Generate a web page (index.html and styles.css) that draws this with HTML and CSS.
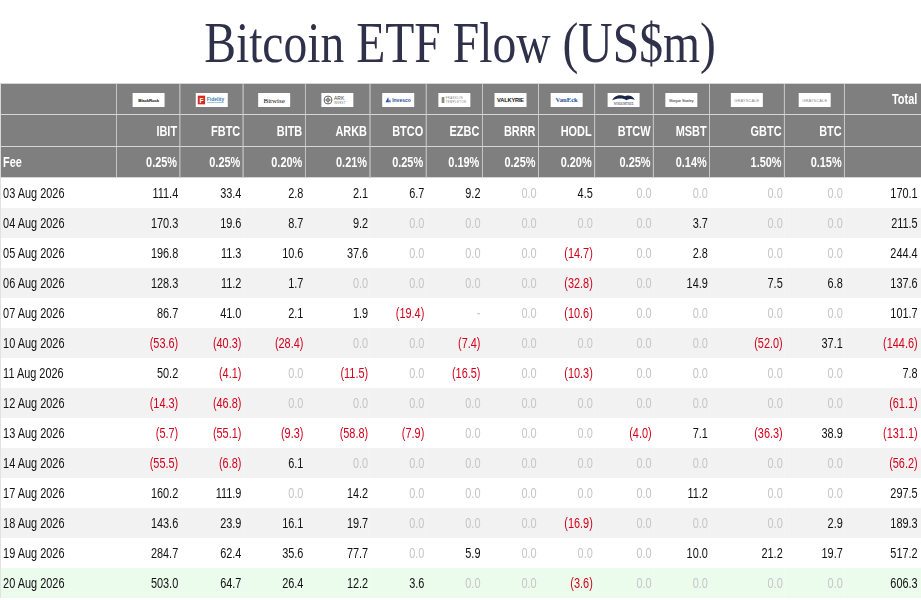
FILE: index.html
```html
<!DOCTYPE html>
<html>
<head>
<meta charset="utf-8">
<title>Bitcoin ETF Flow</title>
<link rel="stylesheet" href="styles.css">
</head>
<body>
<div class="page">
<h1 class="title"><span class="title-text">Bitcoin ETF Flow (US$m)</span></h1>
<div class="table-wrap">
<table class="flow">
  <colgroup>
    <col class="w-date"><col class="w-63"><col class="w-63"><col class="w-62"><col class="w-65">
    <col class="w-56"><col class="w-56"><col class="w-56"><col class="w-56"><col class="w-59">
    <col class="w-56"><col class="w-75"><col class="w-60"><col class="w-78">
  </colgroup>
  <thead>
    <tr class="logos">
      <th></th>
      <th><span class="logo"><svg viewBox="0 0 96 42" width="41" height="14" preserveAspectRatio="none"><text x="48" y="26" text-anchor="middle" class="lg-br">BlackRock</text></svg></span></th>
      <th><span class="logo"><svg viewBox="0 0 96 42" width="41" height="14" preserveAspectRatio="none"><rect x="6" y="8" width="22" height="26" fill="#d52b1e"/><text x="17" y="29" text-anchor="middle" class="lg-fid-f">F</text><text x="33" y="23" class="lg-fid">Fidelity</text><rect x="34" y="28" width="50" height="2" fill="#7fa9c4"/></svg></span></th>
      <th><span class="logo"><svg viewBox="0 0 96 42" width="41" height="14" preserveAspectRatio="none"><text x="48" y="29" text-anchor="middle" class="lg-bw">Bitwise</text></svg></span></th>
      <th><span class="logo"><svg viewBox="0 0 96 42" width="41" height="14" preserveAspectRatio="none"><circle cx="20" cy="21" r="12" fill="none" stroke="#555" stroke-width="2.5"/><circle cx="20" cy="21" r="5" fill="none" stroke="#555" stroke-width="2"/><line x1="8" y1="21" x2="32" y2="21" stroke="#555" stroke-width="2"/><line x1="20" y1="9" x2="20" y2="33" stroke="#555" stroke-width="2"/><text x="38" y="22" class="lg-ark">ARK</text><text x="38" y="34" class="lg-ark2">INVEST</text></svg></span></th>
      <th><span class="logo"><svg viewBox="0 0 96 42" width="41" height="14" preserveAspectRatio="none"><path d="M10 28 L18 12 L20 28 Z" fill="#1f4e9e"/><path d="M18 28 L24 18 L26 28 Z" fill="#4a7fd0"/><text x="30" y="27" class="lg-inv">Invesco</text></svg></span></th>
      <th><span class="logo"><svg viewBox="0 0 96 42" width="41" height="14" preserveAspectRatio="none"><rect x="10" y="12" width="8" height="18" fill="#888"/><text x="22" y="19" class="lg-ft">FRANKLIN</text><text x="22" y="30" class="lg-ft">TEMPLETON</text></svg></span></th>
      <th><span class="logo"><svg viewBox="0 0 96 42" width="41" height="14" preserveAspectRatio="none"><text x="48" y="27" text-anchor="middle" class="lg-val">VALKYRIE</text></svg></span></th>
      <th><span class="logo"><svg viewBox="0 0 96 42" width="41" height="14" preserveAspectRatio="none"><text x="48" y="28" text-anchor="middle" class="lg-ve">VanEck</text></svg></span></th>
      <th><span class="logo"><svg viewBox="0 0 96 42" width="41" height="14" preserveAspectRatio="none"><path d="M14 22 C20 6 40 4 52 10 C60 4 76 8 82 20 C70 16 62 18 56 22 C50 16 30 14 14 22 Z" fill="#1c2648"/><text x="48" y="36" text-anchor="middle" class="lg-wt">WISDOMTREE</text></svg></span></th>
      <th><span class="logo"><svg viewBox="0 0 96 42" width="41" height="14" preserveAspectRatio="none"><text x="48" y="26" text-anchor="middle" class="lg-ms">Morgan Stanley</text></svg></span></th>
      <th><span class="logo"><svg viewBox="0 0 96 42" width="41" height="14" preserveAspectRatio="none"><text x="48" y="26" text-anchor="middle" class="lg-gs">GRAYSCALE</text></svg></span></th>
      <th><span class="logo"><svg viewBox="0 0 96 42" width="41" height="14" preserveAspectRatio="none"><text x="48" y="26" text-anchor="middle" class="lg-gs">GRAYSCALE</text></svg></span></th>
      <th class="num tot">Total</th>
    </tr>
    <tr class="tickers">
      <th></th>
      <th class="num">IBIT</th><th class="num">FBTC</th><th class="num">BITB</th><th class="num">ARKB</th>
      <th class="num">BTCO</th><th class="num">EZBC</th><th class="num">BRRR</th><th class="num">HODL</th>
      <th class="num">BTCW</th><th class="num">MSBT</th><th class="num">GBTC</th><th class="num">BTC</th>
      <th></th>
    </tr>
    <tr class="fees">
      <th class="lbl">Fee</th>
      <th class="num">0.25%</th><th class="num">0.25%</th><th class="num">0.20%</th><th class="num">0.21%</th>
      <th class="num">0.25%</th><th class="num">0.19%</th><th class="num">0.25%</th><th class="num">0.20%</th>
      <th class="num">0.25%</th><th class="num">0.14%</th><th class="num">1.50%</th><th class="num">0.15%</th>
      <th></th>
    </tr>
  </thead>
  <tbody>
    <tr><td class="date">03 Aug 2026</td><td>111.4</td><td>33.4</td><td>2.8</td><td>2.1</td><td>6.7</td><td>9.2</td><td class="z">0.0</td><td>4.5</td><td class="z">0.0</td><td class="z">0.0</td><td class="z">0.0</td><td class="z">0.0</td><td class="tot">170.1</td></tr>
    <tr><td class="date">04 Aug 2026</td><td>170.3</td><td>19.6</td><td>8.7</td><td>9.2</td><td class="z">0.0</td><td class="z">0.0</td><td class="z">0.0</td><td class="z">0.0</td><td class="z">0.0</td><td>3.7</td><td class="z">0.0</td><td class="z">0.0</td><td class="tot">211.5</td></tr>
    <tr><td class="date">05 Aug 2026</td><td>196.8</td><td>11.3</td><td>10.6</td><td>37.6</td><td class="z">0.0</td><td class="z">0.0</td><td class="z">0.0</td><td class="neg">(14.7)</td><td class="z">0.0</td><td>2.8</td><td class="z">0.0</td><td class="z">0.0</td><td class="tot">244.4</td></tr>
    <tr><td class="date">06 Aug 2026</td><td>128.3</td><td>11.2</td><td>1.7</td><td class="z">0.0</td><td class="z">0.0</td><td class="z">0.0</td><td class="z">0.0</td><td class="neg">(32.8)</td><td class="z">0.0</td><td>14.9</td><td>7.5</td><td>6.8</td><td class="tot">137.6</td></tr>
    <tr><td class="date">07 Aug 2026</td><td>86.7</td><td>41.0</td><td>2.1</td><td>1.9</td><td class="neg">(19.4)</td><td class="z">-</td><td class="z">0.0</td><td class="neg">(10.6)</td><td class="z">0.0</td><td class="z">0.0</td><td class="z">0.0</td><td class="z">0.0</td><td class="tot">101.7</td></tr>
    <tr><td class="date">10 Aug 2026</td><td class="neg">(53.6)</td><td class="neg">(40.3)</td><td class="neg">(28.4)</td><td class="z">0.0</td><td class="z">0.0</td><td class="neg">(7.4)</td><td class="z">0.0</td><td class="z">0.0</td><td class="z">0.0</td><td class="z">0.0</td><td class="neg">(52.0)</td><td>37.1</td><td class="tot neg">(144.6)</td></tr>
    <tr><td class="date">11 Aug 2026</td><td>50.2</td><td class="neg">(4.1)</td><td class="z">0.0</td><td class="neg">(11.5)</td><td class="z">0.0</td><td class="neg">(16.5)</td><td class="z">0.0</td><td class="neg">(10.3)</td><td class="z">0.0</td><td class="z">0.0</td><td class="z">0.0</td><td class="z">0.0</td><td class="tot">7.8</td></tr>
    <tr><td class="date">12 Aug 2026</td><td class="neg">(14.3)</td><td class="neg">(46.8)</td><td class="z">0.0</td><td class="z">0.0</td><td class="z">0.0</td><td class="z">0.0</td><td class="z">0.0</td><td class="z">0.0</td><td class="z">0.0</td><td class="z">0.0</td><td class="z">0.0</td><td class="z">0.0</td><td class="tot neg">(61.1)</td></tr>
    <tr><td class="date">13 Aug 2026</td><td class="neg">(5.7)</td><td class="neg">(55.1)</td><td class="neg">(9.3)</td><td class="neg">(58.8)</td><td class="neg">(7.9)</td><td class="z">0.0</td><td class="z">0.0</td><td class="z">0.0</td><td class="neg">(4.0)</td><td>7.1</td><td class="neg">(36.3)</td><td>38.9</td><td class="tot neg">(131.1)</td></tr>
    <tr><td class="date">14 Aug 2026</td><td class="neg">(55.5)</td><td class="neg">(6.8)</td><td>6.1</td><td class="z">0.0</td><td class="z">0.0</td><td class="z">0.0</td><td class="z">0.0</td><td class="z">0.0</td><td class="z">0.0</td><td class="z">0.0</td><td class="z">0.0</td><td class="z">0.0</td><td class="tot neg">(56.2)</td></tr>
    <tr><td class="date">17 Aug 2026</td><td>160.2</td><td>111.9</td><td class="z">0.0</td><td>14.2</td><td class="z">0.0</td><td class="z">0.0</td><td class="z">0.0</td><td class="z">0.0</td><td class="z">0.0</td><td>11.2</td><td class="z">0.0</td><td class="z">0.0</td><td class="tot">297.5</td></tr>
    <tr><td class="date">18 Aug 2026</td><td>143.6</td><td>23.9</td><td>16.1</td><td>19.7</td><td class="z">0.0</td><td class="z">0.0</td><td class="z">0.0</td><td class="neg">(16.9)</td><td class="z">0.0</td><td class="z">0.0</td><td class="z">0.0</td><td>2.9</td><td class="tot">189.3</td></tr>
    <tr><td class="date">19 Aug 2026</td><td>284.7</td><td>62.4</td><td>35.6</td><td>77.7</td><td class="z">0.0</td><td>5.9</td><td class="z">0.0</td><td class="z">0.0</td><td class="z">0.0</td><td>10.0</td><td>21.2</td><td>19.7</td><td class="tot">517.2</td></tr>
    <tr class="latest"><td class="date">20 Aug 2026</td><td>503.0</td><td>64.7</td><td>26.4</td><td>12.2</td><td>3.6</td><td class="z">0.0</td><td class="z">0.0</td><td class="neg">(3.6)</td><td class="z">0.0</td><td class="z">0.0</td><td class="z">0.0</td><td class="z">0.0</td><td class="tot">606.3</td></tr>
  </tbody>
</table>
</div>
</div>
</body>
</html>
```

FILE: styles.css
```css
html, body {
  margin: 0;
  padding: 0;
  background: #ffffff;
}

body {
  font-family: "Liberation Sans", Arial, sans-serif;
}

.page {
  width: 921px;
  overflow: hidden;
}

/* Title: Times-style serif, slightly condensed as in the source */
.title {
  margin: 0;
  padding-top: 12px;
  height: 83px;
  box-sizing: border-box;
  font-family: "Liberation Serif", "Times New Roman", serif;
  font-weight: normal;
  font-size: 56px;
  line-height: 62px;
  color: #2f3049;
  text-align: center;
  white-space: nowrap;
}

.title-text {
  display: inline-block;
  transform: scaleX(0.85);
  transform-origin: 50% 50%;
}

/* The table is laid out at its natural width and condensed horizontally
   to fit the 921px frame, like the source rendering. */
.table-wrap {
  width: 921px;
  overflow: hidden;
}

.flow {
  width: 1181px;
  table-layout: fixed;
  border-collapse: collapse;
  font-size: 14px;
  border-left: 1px solid #dcdcdc;
  transform: scaleX(0.78);
  transform-origin: 0 0;
}

.w-date { width: 149px; }
.w-56 { width: 72px; }
.w-59 { width: 75.5px; }
.w-60 { width: 77px; }
.w-62 { width: 79.5px; }
.w-63 { width: 81px; }
.w-65 { width: 83px; }
.w-75 { width: 96px; }
.w-78 { width: 100px; }

.flow th {
  background: #7f7f7f;
  color: #ffffff;
  font-weight: bold;
  border: 1px solid #d6d6d6;
  padding: 0 3px;
  white-space: nowrap;
}

.flow th.num { text-align: right; }
.flow th.lbl { text-align: left; padding-left: 3px; }
.flow th.tot { padding-right: 6px; }

.logos th { height: 30px; text-align: center; }
.tickers th { height: 31px; }
.fees th { height: 30px; }

.logo {
  display: inline-block;
  width: 41px;
  height: 14px;
  background: #ffffff;
  vertical-align: middle;
}

.logo svg { display: block; }

.lg-br { font: bold 13px "Liberation Sans", Arial, sans-serif; fill: #111; letter-spacing: -0.5px; }
.lg-fid-f { font: bold 20px "Liberation Sans", Arial, sans-serif; fill: #ffffff; }
.lg-fid { font: bold 15px "Liberation Sans", Arial, sans-serif; fill: #3a7fb6; }
.lg-bw { font: 21px "Liberation Serif", serif; fill: #111; }
.lg-ark { font: 15px "Liberation Sans", Arial, sans-serif; fill: #444; }
.lg-ark2 { font: 8px "Liberation Sans", Arial, sans-serif; fill: #666; letter-spacing: 1px; }
.lg-inv { font: bold 15px "Liberation Sans", Arial, sans-serif; fill: #1f4e9e; }
.lg-ft { font: 8px "Liberation Sans", Arial, sans-serif; fill: #777; letter-spacing: 1.5px; }
.lg-val { font: bold 17px "Liberation Sans", Arial, sans-serif; fill: #111; letter-spacing: -0.5px; }
.lg-ve { font: bold 20px "Liberation Serif", serif; fill: #1c4f9c; }
.lg-wt { font: 9px "Liberation Serif", serif; fill: #1c2648; }
.lg-ms { font: 11px "Liberation Sans", Arial, sans-serif; fill: #222; letter-spacing: -0.3px; }
.lg-gs { font: 12px "Liberation Sans", Arial, sans-serif; fill: #888; letter-spacing: 0.3px; }

.flow td {
  height: 30px;
  padding: 0 2px 0 0;
  text-align: right;
  color: #111111;
  white-space: nowrap;
}

.flow td.date {
  text-align: left;
  padding-left: 3px;
}

.flow td.tot { padding-right: 6px; }

.flow tbody tr:nth-child(even) td { background: #f2f2f2; }
.flow tbody tr.latest td { background: #ebfbec; }

.flow td.z { color: #c6c6c6; }
.flow td.neg { color: #d4001a; }
```
